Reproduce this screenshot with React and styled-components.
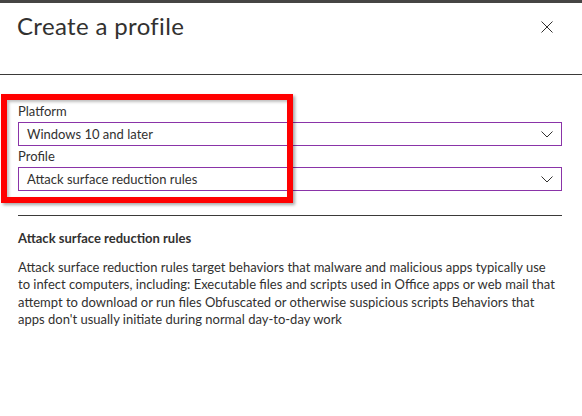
import React from "react";
import styled, { createGlobalStyle } from "styled-components";

const Global = createGlobalStyle`
  html, body { margin: 0; padding: 0; background: #fff; }
  body { font-family: "Segoe UI", Lato, "Noto Sans", sans-serif; color: #323130; }
  * { box-sizing: border-box; }
`;

const Panel = styled.div`
  position: relative;
  width: 582px;
  height: 416px;
  display: flex;
  flex-direction: column;
  background: #fff;
  overflow: hidden;
`;

const TopBar = styled.div`
  height: 3px;
  background: #464544;
  flex: none;
`;

const Header = styled.header`
  height: 72px;
  flex: none;
  display: flex;
  align-items: flex-start;
  justify-content: space-between;
  padding: 8px 29px 0 17px;
  border-bottom: 1px solid #3b3a39;
`;

const Title = styled.h1`
  margin: 0;
  font-size: 24px;
  line-height: 30px;
  letter-spacing: 0.35px;
  font-weight: 400;
  color: #323130;
`;

const CloseButton = styled.button`
  border: 0;
  background: none;
  padding: 0;
  margin-top: 10px;
  width: 12px;
  height: 12px;
  display: flex;
  cursor: pointer;
`;

const Body = styled.div`
  padding: 26px 20px 0 18px;
  display: flex;
  flex-direction: column;
`;

const Label = styled.label`
  font-size: 13px;
  line-height: 21px;
  color: #323130;
`;

const Dropdown = styled.div`
  height: 24px;
  border: 1px solid #8a34a8;
  display: flex;
  align-items: center;
  justify-content: space-between;
  padding: 0 8px 0 8px;
  font-size: 13px;
  color: #323130;
`;

const Divider = styled.hr`
  margin: 24px 0 0;
  border: 0;
  border-top: 1px solid #3b3a39;
`;

const Heading = styled.h2`
  margin: 12px 0 0;
  font-size: 13px;
  line-height: 20px;
  font-weight: 700;
  color: #323130;
`;

const Paragraph = styled.p`
  margin: 11px 0 0;
  font-size: 13px;
  line-height: 17.33px;
  color: #323130;
`;

const Line = styled.span`
  display: block;
  white-space: nowrap;
`;

const Highlight = styled.div`
  position: absolute;
  left: 1px;
  top: 94px;
  width: 292px;
  height: 109px;
  border: 6px solid #ff0000;
  box-shadow: 2px 2px 3px rgba(0, 0, 0, 0.35), inset 2px 2px 3px rgba(0, 0, 0, 0.25);
  pointer-events: none;
`;

const Chevron = () => (
  <svg width="12" height="7" viewBox="0 0 12 7" fill="none">
    <polyline points="0.5,0.5 6,6 11.5,0.5" stroke="#323130" strokeWidth="1" />
  </svg>
);

const CloseIcon = () => (
  <svg width="12" height="12" viewBox="0 0 12 12" fill="none">
    <path d="M0.5 0.5 L11.5 11.5 M11.5 0.5 L0.5 11.5" stroke="#323130" strokeWidth="1" />
  </svg>
);

const description = [
  "Attack surface reduction rules target behaviors that malware and malicious apps typically use",
  "to infect computers, including: Executable files and scripts used in Office apps or web mail that",
  "attempt to download or run files Obfuscated or otherwise suspicious scripts Behaviors that",
  "apps don't usually initiate during normal day-to-day work",
];

export default function App() {
  return (
    <>
      <Global />
      <Panel>
        <TopBar />
        <Header>
          <Title>Create a profile</Title>
          <CloseButton aria-label="Close">
            <CloseIcon />
          </CloseButton>
        </Header>
        <Body>
          <Label>Platform</Label>
          <Dropdown>
            <span>Windows 10 and later</span>
            <Chevron />
          </Dropdown>
          <Label>Profile</Label>
          <Dropdown>
            <span>Attack surface reduction rules</span>
            <Chevron />
          </Dropdown>
          <Divider />
          <Heading>Attack surface reduction rules</Heading>
          <Paragraph>
            {description.map((line) => (
              <Line key={line}>{line}</Line>
            ))}
          </Paragraph>
        </Body>
        <Highlight />
      </Panel>
    </>
  );
}
